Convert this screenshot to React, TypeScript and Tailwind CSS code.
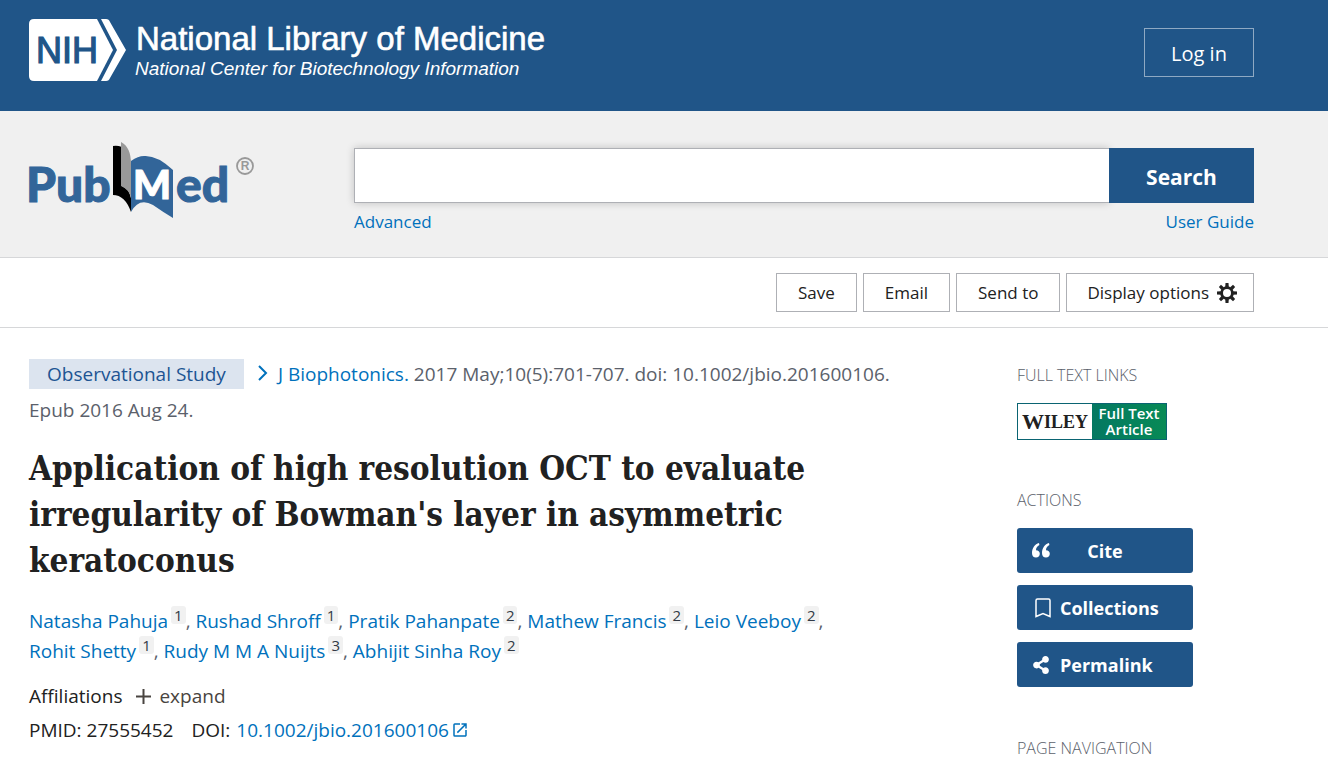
import type { ReactNode } from "react"
import { MdOpenInNew } from "react-icons/md"
import { FaShareAlt } from "react-icons/fa"

const authors = [
    { name: "Natasha Pahuja", ref: 1 },
    { name: "Rushad Shroff", ref: 1 },
    { name: "Pratik Pahanpate", ref: 2 },
    { name: "Mathew Francis", ref: 2 },
    { name: "Leio Veeboy", ref: 2 },
    { name: "Rohit Shetty", ref: 1 },
    { name: "Rudy M M A Nuijts", ref: 3 },
    { name: "Abhijit Sinha Roy", ref: 2 },
]

function NlmLogo() {
    return (
        <svg width="530" height="66" viewBox="0 0 530 66" role="img" aria-label="National Library of Medicine">
            <path fill="#fff" d="M5 0H68L84 31L68 62H5Q0 62 0 57V5Q0 0 5 0Z" />
            <path fill="#fff" d="M72 0H77Q80 0 81 3L97 31L81 59Q80 62 77 62H72L88 31Z" />
            <g fontFamily="Liberation Sans, Arial, sans-serif">
                <text x="7" y="44" fontSize="36" fill="#205588" stroke="#205588" strokeWidth="1.2">NIH</text>
                <text x="107" y="31" fontSize="33" fill="#fff" stroke="#fff" strokeWidth="0.6">National Library of Medicine</text>
                <text x="106" y="56" fontSize="19" fill="#fff" fontStyle="italic">National Center for Biotechnology Information</text>
            </g>
        </svg>
    )
}

function PubMedLogo() {
    return (
        <svg width="230" height="76" viewBox="-4 0 230 76" className="-ml-1" role="img" aria-label="PubMed">
            <g fontFamily="Lato, sans-serif" fontWeight="900" fill="#326599" stroke="#326599" strokeWidth="1">
                <text x="-3" y="60" fontSize="48">Pub</text>
                <text x="147" y="60" fontSize="48">ed</text>
            </g>
            <path fill="#000" d="M84 4Q88 3 93 5V44Q100 47 102 56V70Q96 53 84 53Z" />
            <path fill="#999" d="M92 0Q102 5 102 22V56Q100 47 92 44Z" />
            <path fill="#326599" d="M102 19Q109 14 115 14Q128 13 144 28V76Q134 70 124 63Q110 55 102 70Z" />
            <text x="104" y="57" fontSize="40" fontFamily="Lato, sans-serif" fontWeight="900" fill="#fff" stroke="#fff" strokeWidth="1">M</text>
            <circle cx="216" cy="24" r="8" fill="none" stroke="#999" strokeWidth="1.8" />
            <text x="216" y="28" fontSize="12" textAnchor="middle" fontFamily="Liberation Sans, sans-serif" fontWeight="700" fill="#999">R</text>
        </svg>
    )
}

function GearIcon() {
    return (
        <svg width="20" height="20" viewBox="-10 -10 20 20" aria-hidden="true">
            <circle r="5.4" fill="none" stroke="#212121" strokeWidth="2.8" />
            {[0, 45, 90, 135, 180, 225, 270, 315].map((angle) => (
                <path key={angle} d="M-1.8 -6L-1.5 -10H1.5L1.8 -6Z" fill="#212121" transform={`rotate(${angle})`} />
            ))}
        </svg>
    )
}

function QuoteIcon() {
    return (
        <svg width="18" height="15" viewBox="0 0 18 15" fill="#fff" aria-hidden="true">
            <path d="M7 0C3 1 0 5 0 10C0 13 1.600 14.500 4 14.500C6.300 14.500 7.800 13 7.800 10.800C7.800 8.500 6.200 7.200 4 7.200C4 5 5.200 3 7.400 2Z" />
            <path d="M17 0C13 1 10 5 10 10C10 13 11.600 14.500 14 14.500C16.300 14.500 17.800 13 17.800 10.800C17.800 8.500 16.200 7.200 14 7.200C14 5 15.200 3 17.400 2Z" />
        </svg>
    )
}

function BookmarkIcon() {
    return (
        <svg width="20" height="20" viewBox="-2 0 20 20" fill="none" stroke="#fff" strokeWidth="1.5" aria-hidden="true">
            <path d="M2 18.500V2.500Q2 1 3.500 1H14.500Q16 1 16 2.500V18.500L9 15.500Z" />
        </svg>
    )
}

function ToolbarButton({ children }: { children: ReactNode }) {
    return (
        <button type="button" className="h-[39px] border border-[#aeb0b5] bg-white px-[21px] text-[17px] text-[#212121]">
            {children}
        </button>
    )
}

function ActionButton({ icon, label, centered }: { icon: ReactNode, label: string, centered?: boolean }) {
    return (
        <button type="button" className="flex h-[45px] w-44 items-center rounded-[3px] bg-[#205588] pl-[15px] text-lg font-bold text-white">
            <span className="flex w-7 shrink-0 items-center">{icon}</span>
            <span className={centered ? "flex-1 pr-[43px] text-center" : ""}>{label}</span>
        </button>
    )
}

function SideTitle({ children }: { children: ReactNode }) {
    return <h2 className="text-base leading-5 font-light text-[#5b616b] uppercase">{children}</h2>
}

export default function App() {
    return (
        <div className="bg-white font-['Open_Sans','Noto_Sans',sans-serif] text-[#212121]">
            <header className="flex h-[111px] items-start justify-between bg-[#205588] pr-[74px] pl-[29px]">
                <a href="#" className="mt-[19px]">
                    <NlmLogo />
                </a>
                <button type="button" className="mt-7 h-[49px] w-[110px] border border-[#8fa9c3] pt-0.5 text-xl text-white">Log in</button>
            </header>

            <form className="flex items-start border-b border-[#d6d7d9] bg-[#f0f0f0] pr-[74px] pb-[22px] pl-[29px]">
                <a href="#" className="mt-[31px] w-[325px] shrink-0">
                    <PubMedLogo />
                </a>
                <div className="mt-[37px] flex-1">
                    <div className="flex h-[55px]">
                        <input type="text" aria-label="Search" className="min-w-0 flex-1 border border-r-0 border-[#aeb0b5] bg-white px-3 text-xl shadow-[0_0_8px_rgba(0,0,0,0.2)]" />
                        <button type="submit" className="relative w-[145px] bg-[#205588] pt-1 text-[21px] font-bold text-white">Search</button>
                    </div>
                    <div className="mt-1.5 flex justify-between text-[17px] leading-[26px] text-[#0071bc]">
                        <a href="#">Advanced</a>
                        <a href="#">User Guide</a>
                    </div>
                </div>
            </form>

            <div className="flex justify-end gap-1.5 border-b border-[#d6d7d9] py-[15px] pr-[74px] pl-[29px]">
                <ToolbarButton>Save</ToolbarButton>
                <ToolbarButton>Email</ToolbarButton>
                <ToolbarButton>Send to</ToolbarButton>
                <button type="button" className="flex h-[39px] items-center gap-2 border border-[#aeb0b5] bg-white pr-4 pl-5 text-[17px] text-[#212121]">
                    Display options
                    <GearIcon />
                </button>
            </div>

            <main className="flex items-start justify-between pr-[74px] pl-[29px]">
                <article className="max-w-[880px] flex-1 pt-7">
                    <div className="text-[19px] leading-9 text-[#5b616b]">
                        <span className="mr-3.5 inline-block bg-[#dce4ef] px-[18px] leading-[30px] text-[#205493]">Observational Study</span>
                        <svg width="10" height="16" viewBox="0 0 10 16" className="mr-2.5 inline-block align-baseline" fill="none" stroke="#0071bc" strokeWidth="2" aria-hidden="true">
                            <path d="M1 1L8 8L1 15" />
                        </svg>
                        <a href="#" className="text-[#0071bc]">J Biophotonics.</a>{" "}
                        <span>2017 May;10(5):701-707.</span>{" "}
                        <span>doi: 10.1002/jbio.201600106.</span>{" "}
                        <span className="inline-block">Epub 2016 Aug 24.</span>
                    </div>

                    <h1 className="mt-[18px] font-['DejaVu_Serif_Condensed','DejaVu_Serif',serif] text-[33px] leading-[46px] font-bold">
                        Application of high resolution OCT to evaluate irregularity of Bowman's layer in asymmetric keratoconus
                    </h1>

                    <div className="mt-[22px] max-w-[820px] text-[19px] leading-[30px] text-[#5b616b]">
                        {authors.map((author, i) => (
                            <span key={author.name}>
                                <span className="whitespace-nowrap">
                                    <a href="#" className="text-[#0071bc]">{author.name}</a>
                                    <sup className="ml-[3px] inline-block rounded-[3px] bg-[#f1f1f1] px-[3px] text-[15px] leading-[18px] text-[#323a45]">{author.ref}</sup>
                                    {i < authors.length - 1 && ","}
                                </span>{" "}
                            </span>
                        ))}
                    </div>

                    <div className="mt-[13px] flex items-center text-[19px] leading-[34px]">
                        Affiliations
                        <button type="button" className="ml-3.5 flex items-center gap-2 text-[#494440]">
                            <svg width="15" height="15" viewBox="0 0 15 15" stroke="#494440" strokeWidth="2" aria-hidden="true">
                                <path d="M7.500 0V15M0 7.500H15" />
                            </svg>
                            expand
                        </button>
                    </div>

                    <div className="flex items-center text-[19px] leading-[34px]">
                        <span>PMID: 27555452</span>
                        <span className="mr-1.5 ml-[18px]">DOI:</span>
                        <a href="#" className="flex items-center gap-0.5 text-[#0071bc]">
                            10.1002/jbio.201600106
                            <MdOpenInNew className="size-[18px]" />
                        </a>
                    </div>
                </article>

                <aside className="w-[237px] shrink-0 pt-[37px]">
                    <SideTitle>Full text links</SideTitle>
                    <a href="#" className="mt-[18px] flex h-[37px] w-[150px] border border-[#0a6472] bg-linear-to-r from-[#05666b] to-[#088a55]">
                        <span className="flex w-[74px] items-center justify-center bg-white font-['Liberation_Serif',serif] text-[22px] font-bold text-[#212121]">
                            W<span className="text-lg">ILEY</span>
                        </span>
                        <span className="flex flex-1 flex-col items-center justify-center pb-0.5 text-[15px] leading-4 font-semibold text-white">
                            <span>Full Text</span>
                            <span>Article</span>
                        </span>
                    </a>

                    <div className="mt-[50px]">
                        <SideTitle>Actions</SideTitle>
                        <div className="mt-[18px] flex flex-col gap-3">
                            <ActionButton icon={<QuoteIcon />} label="Cite" centered />
                            <ActionButton icon={<BookmarkIcon />} label="Collections" />
                            <ActionButton icon={<FaShareAlt className="size-[18px]" />} label="Permalink" />
                        </div>
                    </div>

                    <div className="mt-[51px]">
                        <SideTitle>Page navigation</SideTitle>
                    </div>
                </aside>
            </main>
        </div>
    )
}
